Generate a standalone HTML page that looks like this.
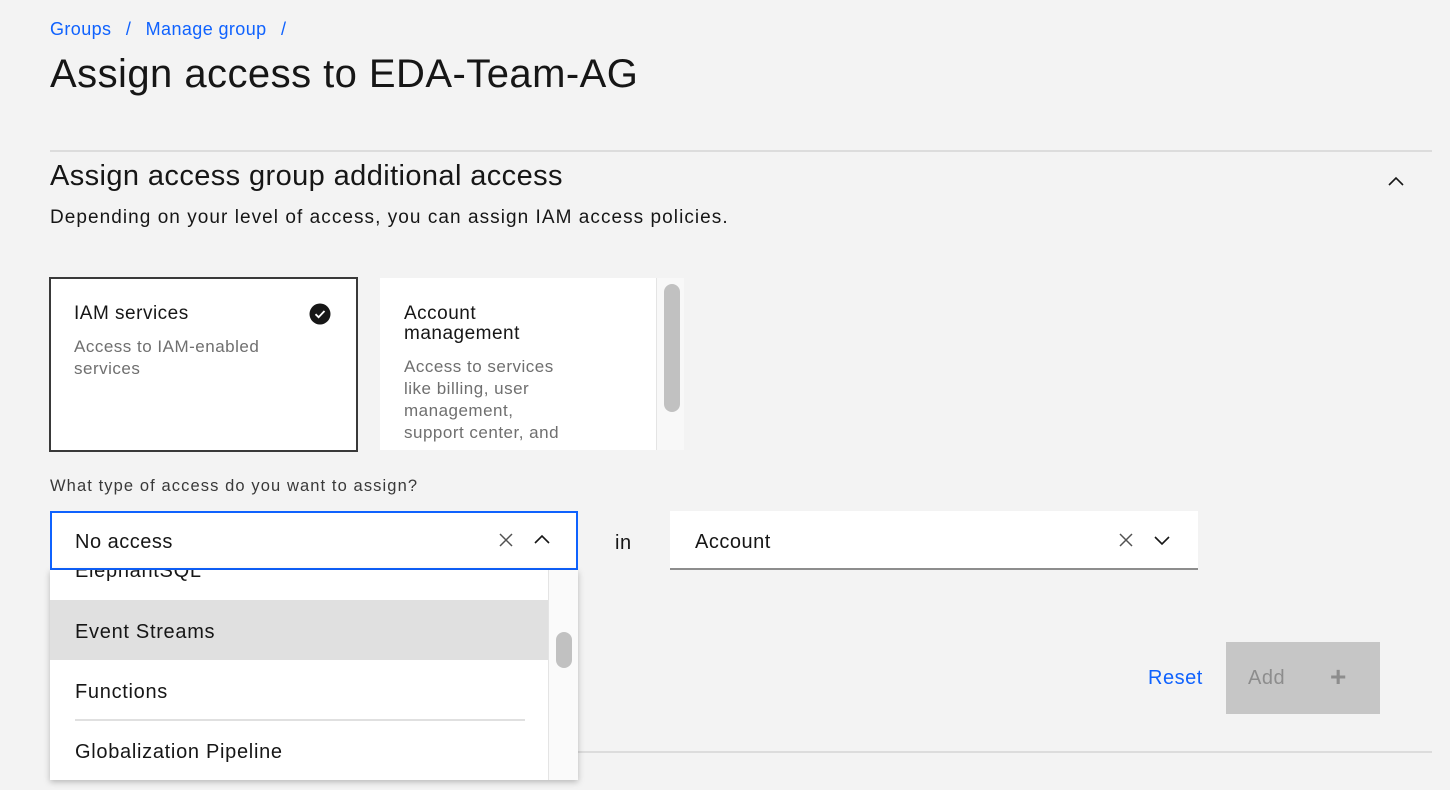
<!DOCTYPE html>
<html><head><meta charset="utf-8"><style>
*{margin:0;padding:0;box-sizing:border-box}
body{width:1450px;height:790px;background:#f3f3f3;font-family:"Liberation Sans",sans-serif;color:#161616;position:relative;overflow:hidden;letter-spacing:0.5px}
.a{position:absolute;white-space:nowrap}
</style></head><body>
<div class="a" style="left:50px;top:19px;font-size:18px;color:#0f62fe;letter-spacing:0.4px">Groups <span style="margin:0 9px">/</span> Manage group <span style="margin-left:9px">/</span></div>
<div class="a" style="left:50px;top:52px;font-size:40px;color:#161616;letter-spacing:0.45px">Assign access to EDA-Team-AG</div>
<div class="a" style="left:50px;top:150px;width:1382px;height:2px;background:#dcdcdc"></div>
<div class="a" style="left:50px;top:160px;font-size:29px;font-weight:300;color:#161616;letter-spacing:0.4px">Assign access group additional access</div>
<svg class="a" style="left:1387px;top:174px" width="18" height="14" viewBox="0 0 18 14"><path d="M2 11 L9 4 L16 11" fill="none" stroke="#161616" stroke-width="1.6"/></svg>
<div class="a" style="left:50px;top:207px;font-size:19px;letter-spacing:1.05px">Depending on your level of access, you can assign IAM access policies.</div>

<div class="a" style="left:49px;top:277px;width:309px;height:175px;background:#fff;border:2px solid #393939"></div>
<div class="a" style="left:74px;top:303px;font-size:19px">IAM services</div>
<div class="a" style="left:74px;top:336px;font-size:17px;color:#6f6f6f;line-height:22px">Access to IAM-enabled<br>services</div>
<svg class="a" style="left:309px;top:303px" width="22" height="22" viewBox="0 0 22 22"><circle cx="11" cy="11" r="10.5" fill="#161616"/><path d="M6.5 11.2 L9.6 14.2 L15.5 8" fill="none" stroke="#fff" stroke-width="1.8"/></svg>

<div class="a" style="left:380px;top:278px;width:276px;height:172px;background:#fff"></div>
<div class="a" style="left:404px;top:304px;font-size:19px;line-height:20px">Account<br>management</div>
<div class="a" style="left:404px;top:356px;font-size:17px;color:#6f6f6f;line-height:22px">Access to services<br>like billing, user<br>management,<br>support center, and</div>
<div class="a" style="left:656px;top:278px;width:28px;height:172px;background:#f8f8f8;border-left:1px solid #e4e4e4"></div>
<div class="a" style="left:664px;top:284px;width:16px;height:128px;background:#c1c1c1;border-radius:8px"></div>

<div class="a" style="left:50px;top:477px;font-size:16.5px;color:#393939;letter-spacing:1.1px">What type of access do you want to assign?</div>
<div class="a" style="left:50px;top:511px;width:528px;height:59px;background:#fff;border:2px solid #0f62fe"></div>
<div class="a" style="left:75px;top:531px;font-size:20px">No access</div>
<svg class="a" style="left:498px;top:532px" width="16" height="16" viewBox="0 0 16 16"><path d="M2 2L14 14M14 2L2 14" stroke="#525252" stroke-width="1.5"/></svg>
<svg class="a" style="left:533px;top:533px" width="18" height="14" viewBox="0 0 18 14"><path d="M2 10 L9 3 L16 10" fill="none" stroke="#161616" stroke-width="1.6"/></svg>
<div class="a" style="left:615px;top:532px;font-size:20px">in</div>
<div class="a" style="left:670px;top:511px;width:528px;height:59px;background:#fff;border-bottom:2px solid #8d8d8d"></div>
<div class="a" style="left:695px;top:531px;font-size:20px">Account</div>
<svg class="a" style="left:1118px;top:532px" width="16" height="16" viewBox="0 0 16 16"><path d="M2 2L14 14M14 2L2 14" stroke="#525252" stroke-width="1.5"/></svg>
<svg class="a" style="left:1153px;top:533px" width="18" height="14" viewBox="0 0 18 14"><path d="M2 4 L9 11 L16 4" fill="none" stroke="#161616" stroke-width="1.6"/></svg>

<div class="a" style="left:50px;top:751px;width:1382px;height:2px;background:#dcdcdc"></div>
<div class="a" style="left:1148px;top:667px;font-size:20px;color:#0f62fe">Reset</div>
<div class="a" style="left:1226px;top:642px;width:154px;height:72px;background:#c6c6c6"></div>
<div class="a" style="left:1248px;top:667px;font-size:20px;color:#8d8d8d">Add</div>
<div class="a" style="left:1330px;top:661px;font-size:28px;font-weight:bold;color:#8d8d8d">+</div>

<div class="a" style="left:50px;top:570px;width:528px;height:210px;background:#fff;box-shadow:0 2px 6px rgba(0,0,0,.25);overflow:hidden;letter-spacing:0.7px">
 <div class="a" style="left:25px;top:-10px;font-size:20px">ElephantSQL</div>
 <div class="a" style="left:0;top:30px;width:498px;height:60px;background:#e0e0e0"></div>
 <div class="a" style="left:25px;top:51px;font-size:20px">Event Streams</div>
 <div class="a" style="left:25px;top:111px;font-size:20px">Functions</div>
 <div class="a" style="left:25px;top:149px;width:450px;height:2px;background:#e0e0e0"></div>
 <div class="a" style="left:25px;top:171px;font-size:20px">Globalization Pipeline</div>
 <div class="a" style="left:498px;top:0;width:30px;height:210px;background:#fafafa;border-left:1px solid #e4e4e4"></div>
 <div class="a" style="left:506px;top:62px;width:16px;height:36px;background:#c1c1c1;border-radius:8px"></div>
</div>
</body></html>
